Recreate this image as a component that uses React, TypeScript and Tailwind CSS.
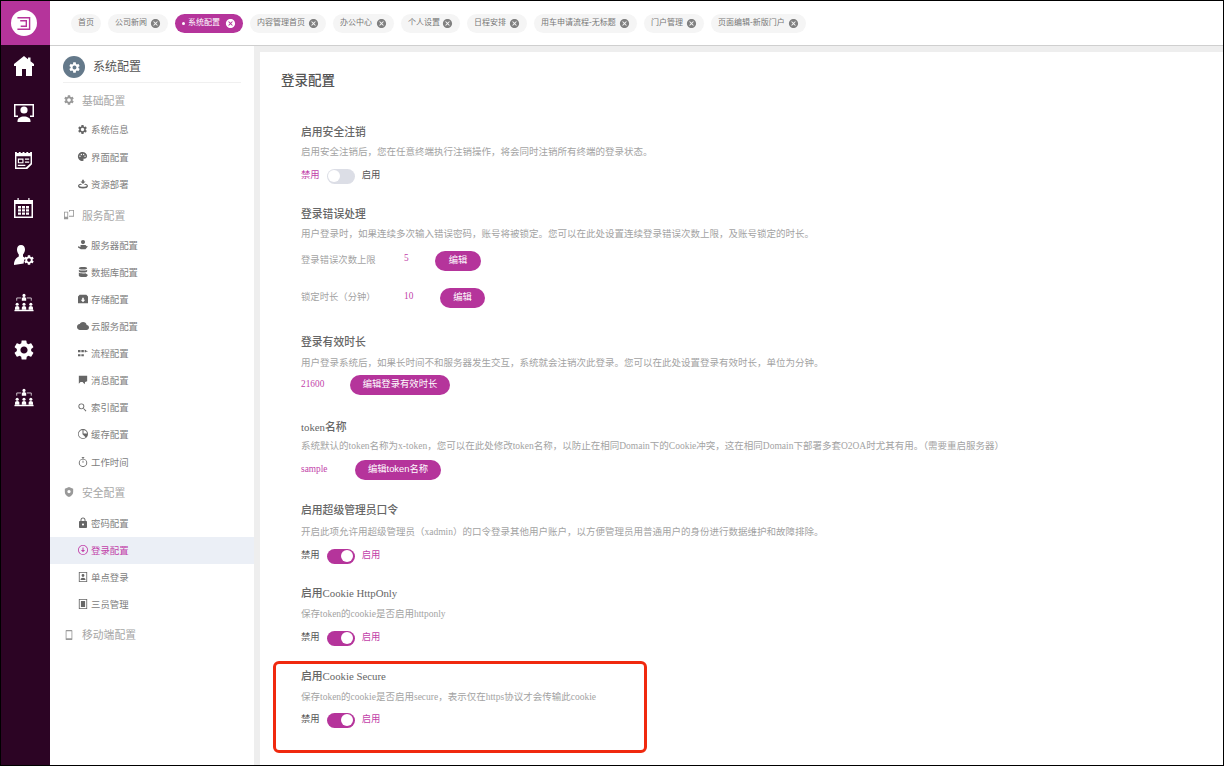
import React from "react";
import { MdSettings, MdPalette, MdCloud, MdSearch, MdLock, MdCancel } from "react-icons/md";

const font = { fontFamily: '"Liberation Serif","Noto Sans CJK SC",serif' };
const sans = { fontFamily: '"Liberation Sans","Noto Sans CJK SC",sans-serif' };

function Org({ className = "" }: { className?: string }) {
  const p = (x: number, y: number) => (
    <g key={`${x}-${y}`}>
      <circle cx={x} cy={y} r={1.7} />
      <path d={`M${x - 2.4} ${y + 6}v-2.2c0-1.2 1-2 2.4-2s2.4.8 2.4 2v2.2z`} />
    </g>
  );
  return (
    <svg viewBox="0 0 22 20" className={className} fill="currentColor">
      {p(11, 2.2)}
      {p(3.5, 12)}
      {p(11, 12)}
      {p(18.5, 12)}
      <path d="M3 8V5h5M19 8V5h-5" fill="none" stroke="currentColor" strokeWidth="0.8" />
      <rect x="0.5" y="18" width="21" height="1.6" />
    </svg>
  );
}

function Logo() {
  return (
    <div className="flex h-[26px] w-[26px] items-center justify-center rounded-full bg-white">
      <svg viewBox="0 0 16 16" className="h-[15px] w-[15px]" fill="none" stroke="#b5349b" strokeWidth="1.5">
        <path d="M1.500 1.800H14.500V14.200H1.500M4.500 5H11V11H5" />
      </svg>
    </div>
  );
}

function RailHome() {
  return (
    <svg viewBox="0 0 20 20" className="h-[20px] w-[20px]" fill="currentColor">
      <path fillRule="evenodd" d="M10 0l4 3.200V1.500h2.500v3.700L20 8v2h-2v10H12v-7H8v7H2V10H0V8z" />
    </svg>
  );
}

function RailMonitor() {
  return (
    <svg viewBox="0 0 20 18" className="h-[18px] w-[20px]" fill="currentColor">
      <path d="M0 0h20v13h-4v-1.500h2.500V1.500h-17v10H4V13H0z" />
      <circle cx="10" cy="6" r="3.600" />
      <path d="M3.500 18v-1c0-2.800 3-4.500 6.500-4.500s6.500 1.700 6.500 4.500v1z" />
    </svg>
  );
}

function RailNews() {
  return (
    <svg viewBox="0 0 18 18" className="h-[17px] w-[17px]" fill="currentColor">
      <path fillRule="evenodd" d="M0 0h2v1h2V0h2v1h2V0h2v1h2V0h2v1h2V0h2v13l-5 5H0zM1.500 4.500v12h10l5-4.500V4.500z" />
      <path fillRule="evenodd" d="M3 7h6v5H3zM4.200 8.200v2.600h3.600V8.200zM10.500 7H15v1.300h-4.500zM10.500 10H15v1.300h-4.500zM3 13.500h8v1.300H3z" />
    </svg>
  );
}

function RailCalendar() {
  return (
    <svg viewBox="0 0 19 20" className="h-[20px] w-[19px]" fill="currentColor">
      <path fillRule="evenodd" d="M0 2h3.500V0h1.200v2h9.600V0h1.200v2H19v18H0zM1.500 6v12.500h16V6z" />
      <path d="M4 8h3v2.400H4zM8 8h3v2.400H8zM12 8h3v2.400h-3zM4 11.200h3v2.400H4zM8 11.200h3v2.400H8zM12 11.200h3v2.400h-3zM4 14.400h3v2.400H4zM8 14.400h3v2.400H8zM12 14.400h3v2.400h-3z" />
    </svg>
  );
}

function RailUserCog() {
  return (
    <div className="relative h-[20px] w-[19px]">
      <svg viewBox="0 0 14 20" className="absolute left-0 top-0 h-[20px] w-[14px]" fill="currentColor">
        <path d="M7 0c2.600 0 4 2 4 4.400 0 2-1 3.600-2 5v2l2.500 1.800c-1.200 1.400-1.800 3-1.800 5.300L0 20c0-3.500 1.200-6.600 4.800-8.400V9.400C3.800 8 3 6.400 3 4.400 3 2 4.400 0 7 0z" />
      </svg>
      <MdSettings className="absolute bottom-[-1px] right-[-2px] text-[12px]" />
    </div>
  );
}

const rail = [
  <RailMonitor key="m" />,
  <RailNews key="n" />,
  <RailCalendar key="c" />,
  <RailUserCog key="u" />,
  <Org key="o1" className="h-[19px] w-[20px]" />,
  <MdSettings key="s" className="text-[24px]" />,
  <Org key="o2" className="h-[19px] w-[20px]" />,
];

const tags: { t: string; w: number; active?: boolean; noClose?: boolean }[] = [
  { t: "首页", w: 30, noClose: true },
  { t: "公司新闻", w: 60 },
  { t: "系统配置", w: 68, active: true },
  { t: "内容管理首页", w: 76 },
  { t: "办公中心", w: 61 },
  { t: "个人设置", w: 59 },
  { t: "日程安排", w: 60 },
  { t: "用车申请流程-无标题", w: 103 },
  { t: "门户管理", w: 60 },
  { t: "页面编辑-新版门户", w: 95 },
];

function Tag({ t, w, active, noClose }: { t: string; w: number; active?: boolean; noClose?: boolean }) {
  return (
    <div
      className={`flex h-[19px] items-center justify-between rounded-full px-[7px] text-[8px] ${active ? "bg-[#b5349b] text-white" : "bg-[#f5f5f5] text-[#777777]"}`}
      style={{ width: w }}
    >
      <span className="flex items-center gap-[3px] whitespace-nowrap">
        {active && <span className="h-[3px] w-[3px] rounded-full bg-white" />}
        {t}
      </span>
      {!noClose && <MdCancel className={`text-[11px] ${active ? "text-white" : "text-[#808080]"}`} />}
    </div>
  );
}

function Glyph({ d }: { d: string }) {
  return (
    <svg viewBox="0 0 12 12" className="h-[10px] w-[10px]" fill="currentColor">
      <path d={d} fillRule="evenodd" />
    </svg>
  );
}

const I = {
  gear: <MdSettings className="text-[11px]" />,
  palette: <MdPalette className="text-[11px]" />,
  deploy: <Glyph d="M5 1h2v2h2L6 6 3 3h2zM0 8.500C0 7 1.300 6 3.500 5.600L5 7c-2 0-3.500.4-3.500 1.100S3.500 9.300 6 9.300s4.500-.5 4.500-1.200S9 7 7 7l1.500-1.400C10.700 6 12 7 12 8.500 12 10.500 9.500 11.500 6 11.500S0 10.500 0 8.500z" />,
  server: <Glyph d="M6 0a2.500 2.500 0 110 5 2.500 2.500 0 010-5zM3 6h6l1.500 1.500H12L9 11H3.500L0 9V7.500l3 .8z" />,
  db: <Glyph d="M1 1.500C1 .6 3 0 6 0s5 .6 5 1.500S9 3 6 3 1 2.400 1 1.500zM1 3.200C2 4 4 4.300 6 4.300S10 4 11 3.200v1.800C11 5.900 9 6.500 6 6.500S1 5.900 1 5zM1 6.700c1 .8 3 1.100 5 1.100 1 0 2-.1 3-.3l3 2L10 12c-1 0-3 .1-4 0-3 0-5-.6-5-1.500z" />,
  store: <Glyph d="M2 1h8l2 2v8H0V3zM5 4.500V7H3.300L6 9.800 8.700 7H7V4.500z" />,
  cloud: <MdCloud className="text-[12px]" />,
  flow: <Glyph d="M0 2.500h3v2.500H0zM4 2.500h3v2.500H4zM8 2.500h1.500v.8h1L12 3.800l-1.500.6h-1v.6H8zM0 7.500h3V10H0zM4 7.500h3V10H4z" />,
  msg: <Glyph d="M1 1h10v6.500L8.500 8.500 8 11 5.500 8.500H3L1 10.500z" />,
  search: <MdSearch className="text-[11px]" />,
  cache: <Glyph d="M6 0a6 6 0 110 12A6 6 0 016 0zm-.6 1.100A5 5 0 109.100 9.900L5.400 6.200zM6.600 1.100v4.300h4.300a5 5 0 00-4.300-4.300z" />,
  timer: <Glyph d="M4.500 0h3v1h-1v1.050a5 5 0 11-1 0V1h-1zM6 3a4 4 0 100 8 4 4 0 000-8zM5.500 4.500h1V7h-1z" />,
  lock: <MdLock className="text-[12px]" />,
  login: <Glyph d="M6 0a6 6 0 110 12A6 6 0 016 0zm0 1a5 5 0 100 10A5 5 0 006 1zM5.400 3h1.200v3H8.500L6 8.800 3.500 6h1.900z" />,
  sso: <Glyph d="M1 0h10v12H1zm1 1v10h8V1zm4 1.500a1.700 1.700 0 110 3.400 1.700 1.700 0 010-3.400zM3 9.500C3 8 4.300 7 6 7s3 1 3 2.500z" />,
  three: <Glyph d="M1 0h10v12H1zm1 1v10h8V1zm1.500 1.500h5v7h-5z" />,
};

function Group({ icon, t, up }: { icon: React.ReactNode; t: string; up?: boolean }) {
  return (
    <div className={`flex h-[32px] items-center pl-[10px] text-[10.8px] text-[#a6a6a6] ${up ? "-translate-y-[1px]" : ""}`}>
      <span className="flex w-[18px] -translate-y-[1px] justify-center text-[#999999]">{icon}</span>
      <span className="ml-[4px]">{t}</span>
    </div>
  );
}

function Item({ icon, t, active }: { icon: React.ReactNode; t: string; active?: boolean }) {
  return (
    <div className={`flex h-[27.1px] items-center pl-[26px] text-[9.4px] ${active ? "bg-[#ebeff6] text-[#c23fa9]" : "text-[#808080]"}`}>
      <span className={`flex w-[13px] -translate-y-[1px] justify-center ${active ? "text-[#c23fa9]" : "text-[#666666]"}`}>{icon}</span>
      <span className="ml-[2px]">{t}</span>
    </div>
  );
}

function Toggle({ on }: { on: boolean }) {
  return (
    <div className="flex h-[20px] items-center text-[9.33px]">
      <span className={on ? "text-[#555555]" : "text-[#c23fa9]"}>禁用</span>
      <span className={`mx-[7px] flex h-[15px] w-[28px] items-center rounded-full p-[1.5px] ${on ? "justify-end bg-[#b5349b]" : "justify-start bg-[#dcdee6]"}`}>
        <span className="h-[12px] w-[12px] rounded-full bg-white" />
      </span>
      <span className={on ? "text-[#c23fa9]" : "text-[#555555]"}>启用</span>
    </div>
  );
}

function Btn({ t, w }: { t: string; w: number }) {
  return (
    <span className="flex h-[20px] items-center justify-center rounded-full bg-[#b5349b] text-[9.33px] text-white" style={{ ...sans, width: w }}>
      {t}
    </span>
  );
}

function Sec({ t, d, mt, dm, after, children }: { t: string; d: string; mt: number; dm: number; after: number; children: React.ReactNode }) {
  return (
    <section style={{ marginTop: mt }}>
      <div className="flex h-[16px] items-center text-[10.8px] font-medium text-[#666666]">{t}</div>
      <div className="flex h-[14px] items-center whitespace-nowrap text-[9.5px] text-[#a3a3a3]" style={{ marginTop: dm }}>
        {d}
      </div>
      <div style={{ marginTop: after }}>{children}</div>
    </section>
  );
}

export default function App() {
  return (
    <div className="flex h-[766px] w-[1224px] flex-col overflow-hidden border border-black bg-[#eeeeee]" style={font}>
      <div className="flex h-[45px] shrink-0 border-b border-[#cfcfcf] bg-white">
        <div className="flex w-[49px] shrink-0 items-center justify-center bg-[#b5349b] pr-[4px]">
          <Logo />
        </div>
        <div className="flex items-center gap-[7px] pl-[21px]">
          {tags.map((x) => (
            <Tag key={x.t} {...x} />
          ))}
        </div>
      </div>

      <div className="-mt-[1px] flex min-h-0 flex-1">
        <div className="flex w-[49px] shrink-0 flex-col items-center bg-[#2c0424] pr-[4px] text-white">
          <div className="mb-[2.5px] flex h-[42px] w-full items-center justify-center">
            <RailHome />
          </div>
          {rail.map((r) => (
            <div key={r.key} className="flex h-[47.4px] w-full items-center justify-center">
              {r}
            </div>
          ))}
        </div>

        <aside className="mt-[1px] w-[204px] shrink-0 bg-white">
          <div className="mx-[13px] flex h-[37px] items-center gap-[8px] border-b border-[#f0f0f0] pt-[6px] text-[12px] text-[#555555]">
            <span className="flex h-[22px] w-[22px] items-center justify-center rounded-full bg-[#64798a] text-white">
              <MdSettings className="text-[13px]" />
            </span>
            系统配置
          </div>
          <div className="mt-[2px]">
            <Group icon={<MdSettings className="text-[12px]" />} t="基础配置" />
          </div>
          <Item icon={I.gear} t="系统信息" />
          <Item icon={I.palette} t="界面配置" />
          <Item icon={I.deploy} t="资源部署" />
          <div className="mt-[2px]">
            <Group icon={<Glyph d="M0 2h5v9H0zM1 3v5h3V3zM6 0h6v8H6V7h5V1H7v1H6z" />} t="服务配置" />
          </div>
          <Item icon={I.server} t="服务器配置" />
          <Item icon={I.db} t="数据库配置" />
          <Item icon={I.store} t="存储配置" />
          <Item icon={I.cloud} t="云服务配置" />
          <Item icon={I.flow} t="流程配置" />
          <Item icon={I.msg} t="消息配置" />
          <Item icon={I.search} t="索引配置" />
          <Item icon={I.cache} t="缓存配置" />
          <Item icon={I.timer} t="工作时间" />
          <div className="mt-[2px]">
            <Group up icon={<Glyph d="M6 0l5 2v4c0 3-2 5-5 6-3-1-5-3-5-6V2zm0 3.500a2 2 0 100 4 2 2 0 000-4z" />} t="安全配置" />
          </div>
          <Item icon={I.lock} t="密码配置" />
          <Item icon={I.login} t="登录配置" active />
          <Item icon={I.sso} t="单点登录" />
          <Item icon={I.three} t="三员管理" />
          <div className="mt-[1px]">
            <Group icon={<Glyph d="M3 0h6a1 1 0 011 1v10a1 1 0 01-1 1H3a1 1 0 01-1-1V1a1 1 0 011-1zm0 1.500v8.500h6V1.500z" />} t="移动端配置" />
          </div>
        </aside>

        <main className="ml-[6px] mt-[7px] min-w-0 flex-1 bg-white pl-[21px]">
          <h1 className="mt-[19px] flex h-[20px] items-center pt-[1px] text-[13.5px] font-medium text-[#555555]">登录配置</h1>
          <div className="pl-[20px]">
            <Sec t="启用安全注销" d="启用安全注销后，您在任意终端执行注销操作，将会同时注销所有终端的登录状态。" mt={33} dm={5} after={7}>
              <Toggle on={false} />
            </Sec>

            <Sec t="登录错误处理" d="用户登录时，如果连续多次输入错误密码，账号将被锁定。您可以在此处设置连续登录错误次数上限，及账号锁定的时长。" mt={20} dm={5} after={10}>
              <div className="flex h-[20px] items-center text-[9.33px] text-[#a3a3a3]">
                <span className="w-[103px]">登录错误次数上限</span>
                <span className="w-[31px] -translate-y-[2px] text-[#c23fa9]">5</span>
                <Btn t="编辑" w={46} />
              </div>
              <div className="mt-[17px] flex h-[20px] items-center text-[9.33px] text-[#a3a3a3]">
                <span className="w-[103px]">锁定时长（分钟）</span>
                <span className="w-[36px] -translate-y-[1px] text-[#c23fa9]">10</span>
                <Btn t="编辑" w={45} />
              </div>
            </Sec>

            <Sec t="登录有效时长" d="用户登录系统后，如果长时间不和服务器发生交互，系统就会注销次此登录。您可以在此处设置登录有效时长，单位为分钟。" mt={26} dm={6} after={5}>
              <div className="flex h-[20px] items-center text-[9.33px] text-[#c23fa9]">
                <span className="w-[49px]">21600</span>
                <Btn t="编辑登录有效时长" w={100} />
              </div>
            </Sec>

            <Sec t="token名称" d="系统默认的token名称为x-token，您可以在此处修改token名称，以防止在相同Domain下的Cookie冲突，这在相同Domain下部署多套O2OA时尤其有用。（需要重启服务器）" mt={24} dm={4} after={7}>
              <div className="flex h-[20px] items-center text-[9.33px] text-[#c23fa9]">
                <span className="w-[54px]">sample</span>
                <Btn t="编辑token名称" w={86} />
              </div>
            </Sec>

            <Sec t="启用超级管理员口令" d="开启此项允许用超级管理员（xadmin）的口令登录其他用户账户，以方便管理员用普通用户的身份进行数据维护和故障排除。" mt={22} dm={7} after={7}>
              <Toggle on />
            </Sec>

            <Sec t="启用Cookie HttpOnly" d="保存token的cookie是否启用httponly" mt={19} dm={6} after={7}>
              <Toggle on />
            </Sec>

            <div className="relative">
              <Sec t="启用Cookie Secure" d="保存token的cookie是否启用secure，表示仅在https协议才会传输此cookie" mt={20} dm={6} after={6}>
                <Toggle on />
              </Sec>
              <div className="absolute left-[-28px] top-[-7px] h-[92px] w-[374px] rounded-[6px] border-[3px] border-[#f0290f]" />
            </div>
          </div>
        </main>
      </div>
    </div>
  );
}
